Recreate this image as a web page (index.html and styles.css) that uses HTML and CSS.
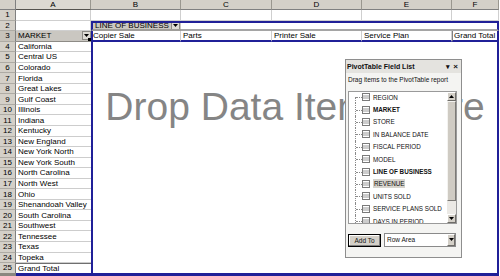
FILE: index.html
```html
<!DOCTYPE html>
<html>
<head>
<meta charset="utf-8">
<link rel="stylesheet" href="styles.css">
</head>
<body>
<div class="sheet">
  <div class="corner"></div>
  <div class="ch sel">A</div><div class="ch">B</div><div class="ch">C</div><div class="ch">D</div><div class="ch">E</div><div class="ch">F</div>

  <div class="rh">1</div><div class="c"></div><div class="c"></div><div class="c"></div><div class="c"></div><div class="c"></div><div class="c"></div>

  <div class="rh">2</div><div class="c"></div>
  <div class="fb lob">LINE OF BUSINESS<span class="dd"><svg width="5" height="3" viewBox="0 0 5 3"><path d="M0 0h5L2.5 3z" fill="#000"/></svg></span></div>
  <div class="r2rest"></div>

  <div class="rh sel">3</div>
  <div class="fb market">MARKET<span class="dd"><svg width="5" height="3" viewBox="0 0 5 3"><path d="M0 0h5L2.5 3z" fill="#000"/></svg></span><span class="handle"></span></div>
  <div class="c3 first">Copier Sale</div><div class="c3">Parts</div><div class="c3">Printer Sale</div><div class="c3">Service Plan</div><div class="c3 gt">Grand Total</div>

  <div class="drop">Drop Data Items Here</div>

  <div class="rh">4</div><div class="ca">California</div>
  <div class="rh">5</div><div class="ca">Central US</div>
  <div class="rh">6</div><div class="ca">Colorado</div>
  <div class="rh">7</div><div class="ca">Florida</div>
  <div class="rh">8</div><div class="ca">Great Lakes</div>
  <div class="rh">9</div><div class="ca">Gulf Coast</div>
  <div class="rh">10</div><div class="ca">Illinois</div>
  <div class="rh">11</div><div class="ca">Indiana</div>
  <div class="rh">12</div><div class="ca">Kentucky</div>
  <div class="rh">13</div><div class="ca">New England</div>
  <div class="rh">14</div><div class="ca">New York North</div>
  <div class="rh">15</div><div class="ca">New York South</div>
  <div class="rh">16</div><div class="ca">North Carolina</div>
  <div class="rh">17</div><div class="ca">North West</div>
  <div class="rh">18</div><div class="ca">Ohio</div>
  <div class="rh">19</div><div class="ca">Shenandoah Valley</div>
  <div class="rh">20</div><div class="ca">South Carolina</div>
  <div class="rh">21</div><div class="ca">Southwest</div>
  <div class="rh">22</div><div class="ca">Tennessee</div>
  <div class="rh">23</div><div class="ca">Texas</div>
  <div class="rh">24</div><div class="ca">Topeka</div>
  <div class="rh last">25</div><div class="ca total">Grand Total</div>
</div>

<div class="fl">
  <div class="fl-title"><span class="fl-name">PivotTable Field List</span><span class="fl-ctl">&#9662;</span><span class="fl-ctl x">&#215;</span></div>
  <div class="fl-hint">Drag items to the PivotTable report</div>
  <div class="list">
    <div class="items">
      <div class="item"><svg class="ico" width="8" height="8" viewBox="0 0 8 8"><rect x="0.5" y="0.5" width="7" height="7" fill="#fff" stroke="#7a7a7a"/><path d="M1 3h6M1 5h6" stroke="#9a9a9a"/></svg><span>REGION</span></div>
      <div class="item b"><svg class="ico" width="8" height="8" viewBox="0 0 8 8"><rect x="0.5" y="0.5" width="7" height="7" fill="#fff" stroke="#7a7a7a"/><path d="M1 3h6M1 5h6" stroke="#9a9a9a"/></svg><span>MARKET</span></div>
      <div class="item"><svg class="ico" width="8" height="8" viewBox="0 0 8 8"><rect x="0.5" y="0.5" width="7" height="7" fill="#fff" stroke="#7a7a7a"/><path d="M1 3h6M1 5h6" stroke="#9a9a9a"/></svg><span>STORE</span></div>
      <div class="item"><svg class="ico" width="8" height="8" viewBox="0 0 8 8"><rect x="0.5" y="0.5" width="7" height="7" fill="#fff" stroke="#7a7a7a"/><path d="M1 3h6M1 5h6" stroke="#9a9a9a"/></svg><span>IN BALANCE DATE</span></div>
      <div class="item"><svg class="ico" width="8" height="8" viewBox="0 0 8 8"><rect x="0.5" y="0.5" width="7" height="7" fill="#fff" stroke="#7a7a7a"/><path d="M1 3h6M1 5h6" stroke="#9a9a9a"/></svg><span>FISCAL PERIOD</span></div>
      <div class="item"><svg class="ico" width="8" height="8" viewBox="0 0 8 8"><rect x="0.5" y="0.5" width="7" height="7" fill="#fff" stroke="#7a7a7a"/><path d="M1 3h6M1 5h6" stroke="#9a9a9a"/></svg><span>MODEL</span></div>
      <div class="item b"><svg class="ico" width="8" height="8" viewBox="0 0 8 8"><rect x="0.5" y="0.5" width="7" height="7" fill="#fff" stroke="#7a7a7a"/><path d="M1 3h6M1 5h6" stroke="#9a9a9a"/></svg><span>LINE OF BUSINESS</span></div>
      <div class="item"><svg class="ico" width="8" height="8" viewBox="0 0 8 8"><rect x="0.5" y="0.5" width="7" height="7" fill="#fff" stroke="#7a7a7a"/><path d="M1 3h6M1 5h6" stroke="#9a9a9a"/></svg><span class="hl">REVENUE</span></div>
      <div class="item"><svg class="ico" width="8" height="8" viewBox="0 0 8 8"><rect x="0.5" y="0.5" width="7" height="7" fill="#fff" stroke="#7a7a7a"/><path d="M1 3h6M1 5h6" stroke="#9a9a9a"/></svg><span>UNITS SOLD</span></div>
      <div class="item"><svg class="ico" width="8" height="8" viewBox="0 0 8 8"><rect x="0.5" y="0.5" width="7" height="7" fill="#fff" stroke="#7a7a7a"/><path d="M1 3h6M1 5h6" stroke="#9a9a9a"/></svg><span>SERVICE PLANS SOLD</span></div>
      <div class="item"><svg class="ico" width="8" height="8" viewBox="0 0 8 8"><rect x="0.5" y="0.5" width="7" height="7" fill="#fff" stroke="#7a7a7a"/><path d="M1 3h6M1 5h6" stroke="#9a9a9a"/></svg><span>DAYS IN PERIOD</span></div>
    </div>
    <div class="sb">
      <div class="sb-btn"><svg width="5" height="3" viewBox="0 0 5 3"><path d="M0 3h5L2.5 0z" fill="#000"/></svg></div>
      <div class="sb-thumb"></div>
      <div class="sb-track"></div>
      <div class="sb-btn"><svg width="5" height="3" viewBox="0 0 5 3"><path d="M0 0h5L2.5 3z" fill="#000"/></svg></div>
    </div>
  </div>
  <div class="fl-foot">
    <div class="addto">Add To</div>
    <div class="sel-box"><span class="sel-val">Row Area</span><span class="sel-btn"><svg width="5" height="3" viewBox="0 0 5 3"><path d="M0 0h5L2.5 3z" fill="#000"/></svg></span></div>
  </div>
</div>
</body>
</html>
```

FILE: styles.css
```css
* { box-sizing: border-box; }
html, body { margin: 0; padding: 0; }
body {
  width: 500px;
  height: 276px;
  overflow: hidden;
  background: #fff;
  font-family: "Liberation Sans", Arial, sans-serif;
  color: #000;
  position: relative;
}
.sheet {
  display: grid;
  grid-template-columns: 16px 75px 90px 91px 90px 90px 47px;
  grid-template-rows: 10px repeat(24, 10.56px) 12.6px;
  font-size: 8px;
  line-height: 9px;
}
.sheet > div {
  display: flex;
  align-items: center;
  white-space: nowrap;
  overflow: hidden;
}
.corner {
  background: #d4d0c8;
  border-right: 1px solid #808080;
  border-bottom: 1px solid #808080;
}
.ch {
  background: #d4d0c8;
  border-right: 1px solid #9a978f;
  border-bottom: 1px solid #808080;
  justify-content: center;
}
.ch.sel { background: #dcd9d2; border-bottom: 1px solid #55534f; }
.rh {
  background: #d4d0c8;
  border-right: 1px solid #808080;
  border-bottom: 1px solid #aeaba4;
  justify-content: center;
}
.rh.sel { background: #c6c2ba; }
.c {
  border-right: 1px solid #cfcfcf;
  border-bottom: 1px solid #cfcfcf;
}
.fb {
  background: #cac7c1;
  padding-left: 2px;
  position: relative;
}
.dd {
  margin-left: auto;
  width: 9px;
  height: 9px;
  background: #dedbd5;
  border: 1px solid #8c8a85;
  display: flex;
  align-items: center;
  justify-content: center;
}
.lob {
  border-top: 2px solid #202098;
  border-left: 2px solid #202098;
  border-bottom: 2px solid #9f9d99;
  padding-right: 1px;
}
.market {
  border-bottom: 1px solid #8d8b86;
  padding-right: 0;
}
.handle {
  position: absolute;
  right: 0;
  bottom: 0;
  width: 3px;
  height: 3px;
  background: #000;
}
.r2rest {
  grid-column: span 4;
  border-top: 2px solid #202098;
  border-right: 2px solid #202098;
  border-bottom: 2px solid #a5a5a5;
}
.c3 {
  border-bottom: 2px solid #202098;
  border-right: 1px solid #cfcfcf;
  padding-left: 2px;
}
.c3.first { border-left: 2px solid #202098; padding-left: 0; }
.c3.gt { border-left: 1px solid #808080; border-right: 2px solid #202098; padding-left: 1px; }
.ca {
  border-bottom: 1px solid #cdcdcd;
  padding-left: 2px;
}
.ca.total {
  border-top: 1px solid #6f6f6f;
  border-bottom: 3px solid #202098;
}
.rh.last { border-bottom: 3px solid #8a877f; }
.sheet > .drop {
  grid-column: 3 / 8;
  grid-row: 5 / 27;
  border-left: 2px solid #202098;
  border-right: 2px solid #202098;
  border-bottom: 3px solid #202098;
  display: block;
  text-align: center;
  font-size: 39px;
  line-height: 39px;
  color: #858585;
  padding-top: 45px;
}

/* Field list */
.fl {
  position: absolute;
  left: 345px;
  top: 59px;
  width: 117px;
  height: 199px;
  background: #f4f4f2;
  border: 1px solid #8e8e8e;
  font-family: "Liberation Sans", Arial, sans-serif;
  font-size: 6.5px;
  color: #111;
}
.fl-title {
  height: 13px;
  display: flex;
  align-items: center;
  background: #e4e3df;
  padding: 0 3px 0 1px;
}
.fl-name { font-weight: bold; font-size: 7px; flex: 1; }
.fl-ctl { font-size: 7px; font-weight: bold; margin-left: 3px; }
.fl-ctl.x { font-size: 8px; }
.fl-hint {
  height: 12px;
  display: flex;
  align-items: center;
  padding-left: 2px;
}
.list {
  margin: 6px 0 0 2px;
  width: 109px;
  height: 133px;
  border: 1px solid #9a9a9a;
  background: #fff;
  display: flex;
  overflow: hidden;
}
.items { flex: 1; margin-top: -1px; }
.item {
  height: 12.4px;
  display: flex;
  align-items: center;
  padding-left: 13px;
  position: relative;
  font-size: 6.3px;
  white-space: nowrap;
}
.item::before {
  content: "";
  position: absolute;
  left: 6px;
  top: 0;
  bottom: 0;
  border-left: 1px dotted #8a8a8a;
}
.item::after {
  content: "";
  position: absolute;
  left: 7px;
  top: 50%;
  width: 6px;
  border-top: 1px dotted #8a8a8a;
}
.item:first-child::before { top: 50%; }
.item.b { font-weight: bold; }
.ico { flex: none; margin-right: 3px; }
.hl { background: #d6d3cc; padding: 1px 1px; }
.sb {
  width: 9px;
  display: flex;
  flex-direction: column;
  background: #d4d0c8;
}
.sb-btn {
  height: 9px;
  background: #d4d0c8;
  border: 1px solid;
  border-color: #fff #6f6d69 #6f6d69 #fff;
  display: flex;
  align-items: center;
  justify-content: center;
}
.sb-thumb {
  flex: 1;
  background: #cfcbc3;
  border: 1px solid;
  border-color: #f4f3f0 #7b7975 #7b7975 #f4f3f0;
}
.sb-track { height: 13px; background: #ebe9e5; }
.fl-foot {
  display: flex;
  align-items: center;
  margin: 8px 0 0 2px;
}
.addto {
  width: 33px;
  height: 13px;
  background: #d4d0c8;
  border: 1px solid #000;
  box-shadow: inset -1px -1px 0 #808080, inset 1px 1px 0 #fff;
  display: flex;
  align-items: center;
  justify-content: center;
  font-size: 6.5px;
  margin-top: 2px;
}
.sel-box {
  margin-left: 3px;
  width: 72px;
  height: 14px;
  background: #fff;
  border: 1px solid #8a8a8a;
  display: flex;
  align-items: center;
}
.sel-val { flex: 1; padding-left: 2px; font-size: 6.5px; }
.sel-btn {
  width: 8px;
  height: 12px;
  background: #d4d0c8;
  border: 1px solid;
  border-color: #fff #6f6d69 #6f6d69 #fff;
  display: flex;
  align-items: center;
  justify-content: center;
}
```
